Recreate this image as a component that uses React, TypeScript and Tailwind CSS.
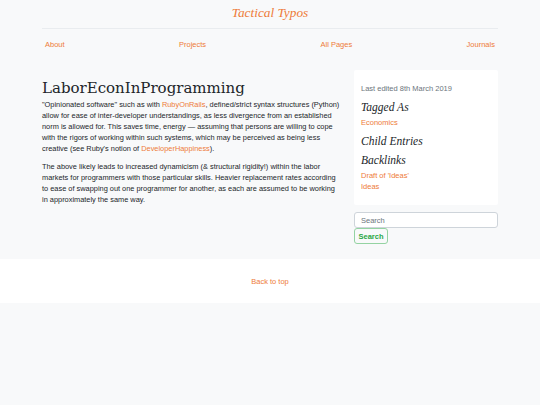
import React from 'react'

const orange = 'text-[#ee7b39]'
const serifHeading = "font-['Liberation_Serif',serif] text-[11.5px] italic leading-[14px]"

export default function App() {
  const navLinks = ['About', 'Projects', 'All Pages', 'Journals']

  return (
    <div className="min-h-screen bg-[#f8f9fa] font-['Liberation_Sans',Arial,sans-serif] text-[7.5px] leading-[11px] text-[#212529]">
      <div className="mx-auto w-[456px]">
        {/* Header */}
        <header className="pt-[5px]">
          <h1 className={`text-center font-['Liberation_Serif',serif] text-[13.3px] italic leading-[16px] ${orange}`}>
            Tactical Typos
          </h1>
          <hr className="mt-[7px] border-t border-[#e9ecef]" />
          <nav className="mt-[9.5px] flex justify-between px-[3px]">
            {navLinks.map((link) => (
              <a key={link} href="#" className={orange}>
                {link}
              </a>
            ))}
          </nav>
        </header>

        {/* Main */}
        <main className="mt-[20px] flex items-start gap-[14px]">
          <article className="w-[298px] pt-[9px] text-[7.4px]">
            <h2 className="mb-[2.5px] font-['DejaVu_Serif',Georgia,serif] text-[15px] leading-[18px] text-[#212529]">
              LaborEconInProgramming
            </h2>
            <p className="mb-[6.5px]">
              "Opinionated software" such as with{' '}
              <a href="#" className={orange}>RubyOnRails</a>, defined/strict syntax structures (Python) allow for ease
              of inter-developer understandings, as less divergence from an established norm is allowed for. This
              saves time, energy — assuming that persons are willing to cope with the rigors of working within such
              systems, which may be perceived as being less creative (see Ruby's notion of{' '}
              <a href="#" className={orange}>DeveloperHappiness</a>).
            </p>
            <p>
              The above likely leads to increased dynamicism (&amp; structural rigidity!) within the labor markets for
              programmers with those particular skills. Heavier replacement rates according to ease of swapping out one
              programmer for another, as each are assumed to be working in approximately the same way.
            </p>
          </article>

          <aside className="w-[144px]">
            <div className="rounded-[2px] bg-white px-[7px] pt-[13.5px] pb-[13px]">
              <p className="text-[#6c757d]">Last edited 8th March 2019</p>
              <h3 className={`mt-[6px] ${serifHeading}`}>Tagged As</h3>
              <a href="#" className={`mt-[3px] block ${orange}`}>Economics</a>
              <h3 className={`mt-[6px] ${serifHeading}`}>Child Entries</h3>
              <h3 className={`mt-[4.5px] ${serifHeading}`}>Backlinks</h3>
              <a href="#" className={`mt-[3px] block ${orange}`}>Draft of 'Ideas'</a>
              <a href="#" className={`mt-[0.5px] block ${orange}`}>Ideas</a>
            </div>
            <form className="mt-[7px]" onSubmit={(e) => e.preventDefault()}>
              <input
                type="text"
                placeholder="Search"
                className="block h-[16px] w-full rounded-[3px] border border-[#ced4da] bg-white px-[6px] text-[7.5px] placeholder:text-[#6c757d] outline-none"
              />
              <button
                type="submit"
                className="block h-[16px] w-[34px] rounded-[3px] border border-[#94d3a2] bg-transparent text-[7.5px] font-bold text-[#28a745]"
              >
                Search
              </button>
            </form>
          </aside>
        </main>
      </div>

      {/* Footer */}
      <footer className="mt-[15px] flex h-[44px] items-center justify-center bg-white">
        <a href="#" className={orange}>Back to top</a>
      </footer>
    </div>
  )
}
